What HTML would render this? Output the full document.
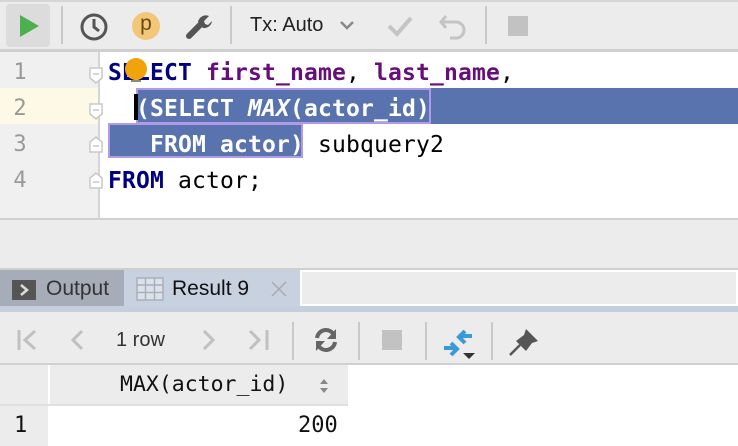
<!DOCTYPE html>
<html><head><meta charset="utf-8"><style>
*{margin:0;padding:0;box-sizing:border-box}
body{width:738px;height:446px;overflow:hidden;background:#ececec;position:relative;font-family:"Liberation Sans",sans-serif}
.a{position:absolute}
.mono{font-family:"DejaVu Sans Mono","Liberation Mono",monospace}
.code{font-size:23px;line-height:36px;white-space:pre;letter-spacing:0.15px}
.kw{color:#000080;font-weight:bold}
.id{color:#660e7a;font-weight:bold}
.ln{color:#999;font-size:22px;width:40px;text-align:center;line-height:36px}
.sep{background:#c9c9c9;width:2px}
</style></head><body>
<div class="a" style="left:0;top:0;width:738px;height:2px;background:#d6d6d6"></div>
<div class="a" style="left:6px;top:4px;width:44px;height:43px;background:#dcdcdc;border-radius:4px"></div>
<svg class="a" style="left:18px;top:14px" width="22" height="24"><path d="M2 1 L21 12 L2 23Z" fill="#4caf50"/></svg>
<div class="a sep" style="left:61px;top:6px;height:38px"></div>
<svg class="a" style="left:79px;top:12px" width="30" height="30"><circle cx="15" cy="15" r="12" fill="none" stroke="#555" stroke-width="3"/><path d="M15 7 V15 L20 19" fill="none" stroke="#555" stroke-width="3"/></svg>
<div class="a" style="left:132px;top:12px;width:28px;height:28px;border-radius:50%;background:#f2c77a;color:#6b4a10;font-size:21px;text-align:center;line-height:24px">p</div>
<svg class="a" style="left:185px;top:12px" width="28" height="28"><path d="M4 24 L15 13" stroke="#555" stroke-width="6" stroke-linecap="round"/><path d="M13 10 A8 8 0 0 1 24 4 L19 9 L20 12 L23 13 L27 9 A8 8 0 0 1 18 16Z" fill="#555"/></svg>
<div class="a sep" style="left:230px;top:6px;height:38px"></div>
<div class="a" style="left:250px;top:14px;font-size:20px;color:#222">Tx: Auto</div>
<svg class="a" style="left:339px;top:20px" width="16" height="12"><path d="M2 2 L8 8 L14 2" fill="none" stroke="#888" stroke-width="2.5"/></svg>
<svg class="a" style="left:386px;top:14px" width="28" height="24"><path d="M3 12 L11 20 L25 4" fill="none" stroke="#c4c4c4" stroke-width="4"/></svg>
<svg class="a" style="left:438px;top:12px" width="30" height="28"><path d="M8 4 L3 10 L8 16" fill="none" stroke="#c4c4c4" stroke-width="3"/><path d="M4 10 H18 A8 8 0 0 1 18 26 H12" fill="none" stroke="#c4c4c4" stroke-width="3"/></svg>
<div class="a sep" style="left:485px;top:6px;height:38px"></div>
<div class="a" style="left:508px;top:16px;width:20px;height:20px;background:#c2c2c2"></div>
<div class="a" style="left:0;top:49px;width:738px;height:3px;background:#cfcfcf"></div>
<div class="a" style="left:0;top:52px;width:738px;height:166px;background:#fff"></div>
<div class="a" style="left:0;top:52px;width:98px;height:166px;background:#f0f0f0"></div>
<div class="a" style="left:98px;top:52px;width:2px;height:166px;background:#d5d5d5"></div>
<div class="a" style="left:0;top:88px;width:98px;height:36px;background:#fdf9e6"></div>
<div class="a" style="left:136px;top:88px;width:602px;height:36px;background:#5873ae"></div>
<div class="a" style="left:136px;top:88px;width:295px;height:36px;border:2px solid #b19ae8"></div>
<div class="a" style="left:108px;top:123px;width:195px;height:35px;background:#5873ae;border:2px solid #b19ae8"></div>
<div class="a" style="left:134px;top:94px;width:4px;height:26px;background:#000"></div>
<div class="a ln mono" style="left:0;top:55px">1</div>
<div class="a ln mono" style="left:0;top:91px">2</div>
<div class="a ln mono" style="left:0;top:127px">3</div>
<div class="a ln mono" style="left:0;top:163px">4</div>
<svg class="a" style="left:88px;top:66px" width="18" height="140">
<path d="M2 2 H14 V12 L8 17 L2 12Z M5 8 H11" fill="#fff" stroke="#c8c8c8" stroke-width="1.5"/>
<path d="M2 38 H14 V48 L8 53 L2 48Z M5 44 H11" fill="#fff" stroke="#c8c8c8" stroke-width="1.5"/>
<path d="M2 76 L8 71 L14 76 V86 H2Z M5 80 H11" fill="#fff" stroke="#c8c8c8" stroke-width="1.5"/>
<path d="M2 112 L8 107 L14 112 V122 H2Z M5 116 H11" fill="#fff" stroke="#c8c8c8" stroke-width="1.5"/>
</svg>
<div class="a mono code" style="left:108px;top:55px"><span class="kw">SELECT</span> <span class="id">first_name</span>, <span class="id">last_name</span>,</div>
<div class="a mono code" style="left:108px;top:91px;color:#fff;font-weight:bold">  (SELECT <i>MAX</i>(actor_id)</div>
<div class="a mono code" style="left:108px;top:127px"><span style="color:#fff;font-weight:bold">   FROM actor)</span> subquery2</div>
<div class="a mono code" style="left:108px;top:163px"><span class="kw">FROM</span> actor;</div>
<div class="a" style="left:125px;top:58px;width:22px;height:22px;border-radius:50%;background:#f0a30a"></div>
<div class="a" style="left:131px;top:80px;width:10px;height:2px;background:#888"></div>
<div class="a" style="left:0;top:218px;width:738px;height:2px;background:#d0d0d0"></div>
<div class="a" style="left:0;top:268px;width:738px;height:2px;background:#cfcfcf"></div>
<div class="a" style="left:0;top:270px;width:124px;height:36px;background:#a6acb8"></div>
<div class="a" style="left:124px;top:270px;width:176px;height:36px;background:#c8d1e0"></div>
<div class="a" style="left:300px;top:270px;width:438px;height:36px;background:#ececec;border:2px solid #fff"></div>
<div class="a" style="left:12px;top:280px;width:24px;height:20px;background:#555"></div>
<svg class="a" style="left:17px;top:283px" width="14" height="14"><path d="M4 2 L10 7 L4 12" fill="none" stroke="#ddd" stroke-width="2.5"/></svg>
<div class="a" style="left:46px;top:277px;font-size:21px;color:#333">Output</div>
<svg class="a" style="left:136px;top:277px" width="28" height="24"><rect x="1" y="1" width="26" height="22" fill="#dde2ea" stroke="#a9b0bb" stroke-width="1.5"/><path d="M1 8 H27 M1 15.5 H27 M9.5 1 V23 M18.5 1 V23" stroke="#a9b0bb" stroke-width="1.5"/></svg>
<div class="a" style="left:172px;top:277px;font-size:21px;color:#111">Result 9</div>
<svg class="a" style="left:270px;top:280px" width="18" height="18"><path d="M2 2 L16 16 M16 2 L2 16" stroke="#aaa" stroke-width="1.5"/></svg>
<div class="a" style="left:0;top:306px;width:738px;height:6px;background:#c5cedd"></div>
<svg class="a" style="left:16px;top:328px" width="24" height="24"><path d="M3 2 V22" stroke="#c0c0c0" stroke-width="3"/><path d="M19 3 L9 12 L19 21" fill="none" stroke="#c0c0c0" stroke-width="3"/></svg>
<svg class="a" style="left:70px;top:328px" width="16" height="24"><path d="M12 3 L3 12 L12 21" fill="none" stroke="#c0c0c0" stroke-width="3"/></svg>
<div class="a" style="left:116px;top:329px;font-size:20px;color:#333">1 row</div>
<svg class="a" style="left:200px;top:328px" width="16" height="24"><path d="M4 3 L13 12 L4 21" fill="none" stroke="#c0c0c0" stroke-width="3"/></svg>
<svg class="a" style="left:246px;top:328px" width="26" height="24"><path d="M4 3 L13 12 L4 21" fill="none" stroke="#c0c0c0" stroke-width="3"/><path d="M21 2 V22" stroke="#c0c0c0" stroke-width="3"/></svg>
<div class="a sep" style="left:292px;top:322px;height:38px"></div>
<svg class="a" style="left:312px;top:327px" width="28" height="26"><path d="M5 11 A9 9 0 0 1 22 8 M23 15 A9 9 0 0 1 6 18" fill="none" stroke="#666" stroke-width="4"/><path d="M24 2 V12 H15Z M4 24 V14 H13Z" fill="#666"/></svg>
<div class="a sep" style="left:358px;top:322px;height:38px"></div>
<div class="a" style="left:382px;top:330px;width:20px;height:20px;background:#c2c2c2"></div>
<div class="a sep" style="left:425px;top:322px;height:38px"></div>
<svg class="a" style="left:443px;top:330px" width="34" height="30"><path d="M29 6 H18 M22 1 L16 7 L22 13" fill="none" stroke="#3a9ad9" stroke-width="4"/><path d="M1 18 H12 M8 13 L14 19 L8 25" fill="none" stroke="#3a9ad9" stroke-width="4"/><path d="M20 23 H32 L26 29Z" fill="#333"/></svg>
<div class="a sep" style="left:491px;top:322px;height:38px"></div>
<svg class="a" style="left:508px;top:329px" width="30" height="28"><path d="M2 26 L12 16" stroke="#555" stroke-width="2.5"/><path d="M8 12 L16 6 L18 0 L30 12 L24 14 L18 22Z" fill="#555"/></svg>
<div class="a" style="left:0;top:363px;width:738px;height:2px;background:#d0d0d0"></div>
<div class="a" style="left:348px;top:365px;width:390px;height:81px;background:#fff"></div>
<div class="a" style="left:48px;top:365px;width:2px;height:81px;background:#fff"></div>
<div class="a" style="left:50px;top:406px;width:298px;height:40px;background:#fff"></div>
<div class="a" style="left:0;top:404px;width:348px;height:2px;background:#e0e0e0"></div>
<div class="a mono" style="left:120px;top:372px;font-size:21.5px;color:#111">MAX(actor_id)</div>
<svg class="a" style="left:318px;top:377px" width="12" height="18"><path d="M2 7 L6 2 L10 7Z M2 11 L6 16 L10 11Z" fill="#888"/></svg>
<div class="a mono" style="left:14px;top:413px;font-size:22px;color:#111">1</div>
<div class="a mono" style="left:298px;top:413px;font-size:22px;color:#111">200</div>
</body></html>
